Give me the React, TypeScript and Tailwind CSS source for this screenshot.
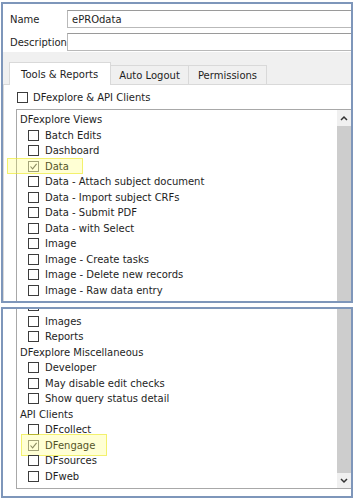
import type { ReactNode } from 'react';

function Box({ checked }: { checked?: boolean }) {
  return (
    <span
      className={`inline-flex h-[11px] w-[11px] shrink-0 items-center justify-center border bg-white ${
        checked ? 'border-[#8a8a8a]' : 'border-[#3c3c3c]'
      }`}
    >
      {checked && (
        <svg width="9" height="9" viewBox="0 0 9 9">
          <path d="M1.5 4.5 L3.6 6.8 L7.6 1.8" fill="none" stroke="#6e6e6e" strokeWidth="1.1" />
        </svg>
      )}
    </span>
  );
}

function Item({ label, checked, mark }: { label?: string; checked?: boolean; mark?: ReactNode }) {
  return (
    <div className="relative flex h-[15.5px] items-center pl-[11px]">
      <Box checked={checked} />
      {label && <span className="ml-[6px] whitespace-nowrap">{label}</span>}
      {mark}
    </div>
  );
}

function Heading({ label }: { label: string }) {
  return <div className="flex h-[15.5px] items-center pl-[3px] whitespace-nowrap">{label}</div>;
}

function ScrollBar({ up }: { up: boolean }) {
  return (
    <div className="flex w-[14px] shrink-0 flex-col">
      {up && (
        <div className="flex h-[16px] items-center justify-center bg-[#f0f0f0]">
          <svg width="8" height="6" viewBox="0 0 8 6">
            <path d="M1 5 L4 2 L7 5" fill="none" stroke="#333" strokeWidth="1.5" />
          </svg>
        </div>
      )}
      <div className="flex-1 bg-[#cdcdcd]" />
      {!up && (
        <div className="flex h-[15px] items-center justify-center bg-[#f0f0f0]">
          <svg width="8" height="6" viewBox="0 0 8 6">
            <path d="M1 1 L4 4 L7 1" fill="none" stroke="#333" strokeWidth="1.5" />
          </svg>
        </div>
      )}
    </div>
  );
}

const views = [
  'Batch Edits',
  'Dashboard',
  'Data',
  'Data - Attach subject document',
  'Data - Import subject CRFs',
  'Data - Submit PDF',
  'Data - with Select',
  'Image',
  'Image - Create tasks',
  'Image - Delete new records',
  'Image - Raw data entry',
];

export default function App() {
  return (
    <div className="h-[501px] w-[356px] bg-white pt-[2px] pl-[1px] font-['DejaVu_Sans',sans-serif] text-[10px] text-[#1e1e1e]">
      {/* top crop */}
      <div className="h-[301px] w-[352px] overflow-hidden border-2 border-[#7e96ba] bg-white">
        <div className="flex flex-col gap-[5px] pt-[6px]">
          <div className="flex h-[18px] items-center">
            <span className="w-[64px] pl-[7px]">Name</span>
            <div className="flex h-full flex-1 items-center border border-r-0 border-[#b9b9b9] border-t-[#9a9a9a] pl-[4px]">
              ePROdata
            </div>
          </div>
          <div className="flex h-[18px] items-center">
            <span className="w-[64px] pl-[7px]">Description</span>
            <div className="h-full flex-1 border border-r-0 border-[#b9b9b9] border-t-[#9a9a9a]" />
          </div>
        </div>

        <div className="mt-px flex h-[33px] items-end border-b border-[#d9d9d9] bg-[#f0f0f0] pl-[6px]">
          <div className="-mb-px flex h-[23px] w-[102px] items-center border border-b-0 border-[#d9d9d9] bg-white pl-[11px]">
            Tools &amp; Reports
          </div>
          <div className="flex h-[19px] w-[78px] items-center justify-center border border-l-0 border-b-0 border-[#d9d9d9]">
            Auto Logout
          </div>
          <div className="flex h-[19px] w-[78px] items-center justify-center border border-l-0 border-b-0 border-[#d9d9d9]">
            Permissions
          </div>
        </div>

        <div className="border-l border-[#d9d9d9] bg-white">
          <div className="flex h-[24px] items-center pl-[13px]">
            <Box />
            <span className="ml-[5px]">DFexplore &amp; API Clients</span>
          </div>
          <div className="ml-[12px] flex h-[200px] border border-r-0 border-[#a8a8a8]">
            <div className="flex-1 pt-[2px]">
              <Heading label="DFexplore Views" />
              {views.map((v) => (
                <Item
                  key={v}
                  label={v}
                  checked={v === 'Data'}
                  mark={
                    v === 'Data' ? (
                      <span className="absolute top-[-1px] left-[-10px] h-[16px] w-[76px] border border-[rgba(235,232,40,0.6)] bg-[rgba(255,255,60,0.22)]" />
                    ) : undefined
                  }
                />
              ))}
            </div>
            <ScrollBar up />
          </div>
        </div>
      </div>

      {/* bottom crop */}
      <div className="mt-[4px] h-[191px] w-[352px] overflow-hidden border-2 border-[#7e96ba] bg-white">
        <div className="ml-[13px] flex h-[180px] border-b border-l border-[#a8a8a8]">
          <div className="flex-1 overflow-hidden">
            <div className="mt-[-11px]">
              <Item />
              <Item label="Images" />
              <Item label="Reports" />
              <Heading label="DFexplore Miscellaneous" />
              <Item label="Developer" />
              <Item label="May disable edit checks" />
              <Item label="Show query status detail" />
              <Heading label="API Clients" />
              <Item label="DFcollect" />
              <Item
                label="DFengage"
                checked
                mark={
                  <span className="absolute top-[-4px] left-[4px] h-[22px] w-[86px] border border-[rgba(235,232,40,0.6)] bg-[rgba(255,255,60,0.22)]" />
                }
              />
              <Item label="DFsources" />
              <Item label="DFweb" />
            </div>
          </div>
          <ScrollBar up={false} />
        </div>
      </div>
    </div>
  );
}
